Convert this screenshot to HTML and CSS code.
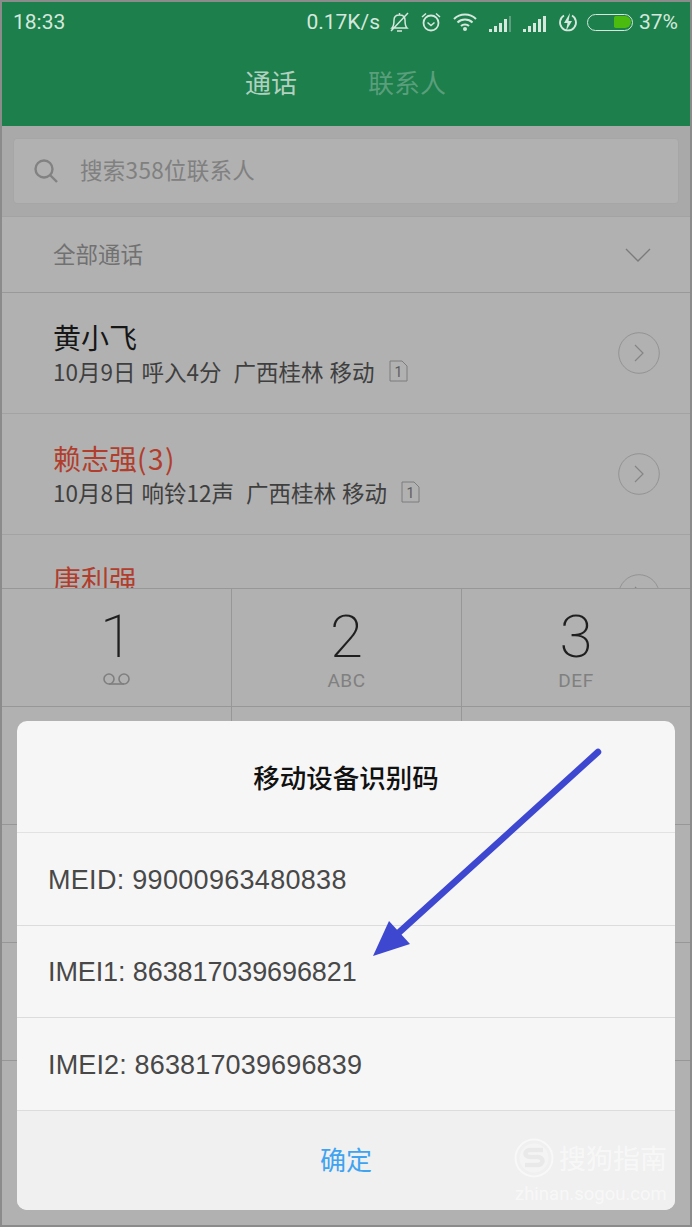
FILE: index.html
```html
<!DOCTYPE html>
<html lang="zh-CN">
<head>
<meta charset="utf-8">
<title>移动设备识别码</title>
<link rel="stylesheet" href="styles.css">
</head>
<body>
<div class="frame">
  <header class="appbar">
    <div class="status">
      <span class="time">18:33</span>
      <div class="status-right">
        <span class="speed">0.17K/s</span>
        <svg class="ic bell" width="21" height="22" viewBox="0 0 21 22"><path d="M3 17c2-2 2-4 2-8 0-3 2-5 5.500-5s5.500 2 5.500 5c0 4 0 6 2 8zM8 20h5M10.500 4V2M2 20L19 2" fill="none" stroke="#d6e8dd" stroke-width="1.500"/></svg>
        <svg class="ic alarm" width="22" height="22" viewBox="0 0 22 22"><circle cx="11" cy="12" r="7.500" fill="none" stroke="#d6e8dd" stroke-width="1.800"/><path d="M7.500 11.500l3.500 3 3.500-3M2 6l4-3.500M20 6l-4-3.500" fill="none" stroke="#d6e8dd" stroke-width="1.600"/></svg>
        <svg class="ic wifi" width="24" height="20" viewBox="0 0 24 20"><path d="M1 7c6-6 16-6 22 0M4.500 10.500c4-4 11-4 15 0M8 14c2-2 6-2 8 0" fill="none" stroke="#d6e8dd" stroke-width="2"/><circle cx="12" cy="17" r="2" fill="#d6e8dd"/></svg>
        <svg class="ic sig1" width="24" height="16" viewBox="0 0 24 16"><g fill="#d6e8dd"><rect x="0" y="13" width="3" height="3"/><rect x="5" y="10" width="3" height="6"/><rect x="10" y="7" width="3" height="9"/><rect x="15" y="3" width="3" height="13"/></g><rect x="20" y="0" width="2" height="16" fill="#5f9f7d"/></svg>
        <svg class="ic sig2" width="24" height="16" viewBox="0 0 24 16"><g fill="#d6e8dd"><rect x="0" y="13" width="3" height="3"/><rect x="5" y="10" width="3" height="6"/><rect x="10" y="7" width="3" height="9"/><rect x="15" y="3" width="3" height="13"/><rect x="20" y="0" width="3" height="16"/></g></svg>
        <svg class="ic charge" width="20" height="20" viewBox="0 0 20 20"><path d="M6 3.500a8 8 0 1 0 8 0" fill="none" stroke="#d6e8dd" stroke-width="1.800"/><path d="M12 1L6 11h3.500L8 19l6-10h-3.500z" fill="#d6e8dd"/></svg>
        <div class="battery"><span class="battery-fill"></span></div>
        <span class="pct">37%</span>
      </div>
    </div>
    <nav class="tabs">
      <span class="tab tab-on">通话</span>
      <span class="tab tab-off">联系人</span>
    </nav>
  </header>

  <div class="searchwrap">
    <div class="search">
      <svg class="search-ic" width="26" height="26" viewBox="0 0 26 26"><circle cx="11" cy="11" r="8.500" fill="none" stroke="#828282" stroke-width="2.400"/><path d="M17 17l7 7" stroke="#828282" stroke-width="2.400"/></svg>
      <span class="search-text">搜索358位联系人</span>
    </div>
  </div>

  <div class="filter">
    <span>全部通话</span>
    <svg width="26" height="14" viewBox="0 0 26 14"><path d="M1 1l12 12L25 1" fill="none" stroke="#7b7b7b" stroke-width="1.400"/></svg>
  </div>

  <div class="calls">
    <div class="call">
      <div class="call-main">
        <div class="name">黄小飞</div>
        <div class="sub"><span>10月9日 呼入4分&nbsp; 广西桂林 移动</span>
          <svg class="sim" width="19" height="22" viewBox="0 0 19 22"><path d="M1 1h12l5 5v15H1z" fill="none" stroke="#7d7d7d"/><text x="9.500" y="16.500" class="sim-num">1</text></svg></div>
      </div>
      <svg class="more" width="42" height="42" viewBox="0 0 42 42"><circle cx="21" cy="21" r="20.300" fill="none" stroke="#939393"/><path d="M17 13l8 8-8 8" fill="none" stroke="#858585" stroke-width="1.200"/></svg>
    </div>
    <div class="call">
      <div class="call-main">
        <div class="name missed">赖志强<span class="count">(3)</span></div>
        <div class="sub"><span>10月8日 响铃12声&nbsp; 广西桂林 移动</span>
          <svg class="sim" width="19" height="22" viewBox="0 0 19 22"><path d="M1 1h12l5 5v15H1z" fill="none" stroke="#7d7d7d"/><text x="9.500" y="16.500" class="sim-num">1</text></svg></div>
      </div>
      <svg class="more" width="42" height="42" viewBox="0 0 42 42"><circle cx="21" cy="21" r="20.300" fill="none" stroke="#939393"/><path d="M17 13l8 8-8 8" fill="none" stroke="#858585" stroke-width="1.200"/></svg>
    </div>
    <div class="call">
      <div class="call-main">
        <div class="name missed">唐利强</div>
        <div class="sub sub-empty"></div>
      </div>
      <svg class="more" width="42" height="42" viewBox="0 0 42 42"><circle cx="21" cy="21" r="20.300" fill="none" stroke="#939393"/><path d="M17 13l8 8-8 8" fill="none" stroke="#858585" stroke-width="1.200"/></svg>
    </div>
  </div>

  <div class="keypad">
    <div class="key"><span class="digit">1</span>
      <svg class="vm" width="30" height="14" viewBox="0 0 30 14"><circle cx="7" cy="7" r="5" fill="none" stroke="#7f7f7f" stroke-width="1.600"/><circle cx="22" cy="7" r="5" fill="none" stroke="#7f7f7f" stroke-width="1.600"/><path d="M7 12h15" stroke="#7f7f7f" stroke-width="1.600"/></svg></div>
    <div class="key"><span class="digit">2</span><span class="letters">ABC</span></div>
    <div class="key"><span class="digit">3</span><span class="letters">DEF</span></div>
    <div class="key"></div><div class="key"></div><div class="key"></div>
    <div class="key"></div><div class="key"></div><div class="key"></div>
    <div class="key"></div><div class="key"></div><div class="key"></div>
  </div>

  <div class="dialog">
    <div class="dialog-title">移动设备识别码</div>
    <div class="dialog-row row-meid">MEID: 99000963480838</div>
    <div class="dialog-row row-imei1">IMEI1: 863817039696821</div>
    <div class="dialog-row row-imei2">IMEI2: 863817039696839</div>
    <div class="dialog-btn">确定</div>
  </div>

  <svg class="arrow" width="240" height="220" viewBox="0 0 240 220"><path d="M226 7L22 192" stroke="#3e47cf" stroke-width="6.500" stroke-linecap="round"/><path d="M1 211L17 176 38 199z" fill="#3e47cf"/></svg>

  <div class="watermark">
    <svg class="wm-logo" width="40" height="40" viewBox="0 0 40 40"><circle cx="20" cy="20" r="18.500" fill="none" stroke="#fff" stroke-opacity=".5" stroke-width="2"/><circle cx="20" cy="20" r="14.500" fill="#fff" fill-opacity=".3"/><path d="M29 12H16c-6 0-6 7 0 7h8c6 0 6 8 0 8H11" fill="none" stroke="#e9e9e9" stroke-width="4.500"/></svg>
    <div class="wm-text">
      <div class="wm-cn">搜狗指南</div>
    </div>
    <div class="wm-url">zhinan.sogou.com</div>
  </div>
</div>
</body>
</html>
```
FILE: styles.css
```css
* { box-sizing: border-box; }
html, body { margin: 0; padding: 0; }
body { width: 692px; height: 1227px; overflow: hidden; font-family: "Roboto", "Noto Sans CJK SC", sans-serif; }
.frame {
  position: relative;
  width: 692px;
  height: 1227px;
  border: 2px solid #8b8b8b;
  background: #b1b1b1;
  display: flex;
  flex-direction: column;
  overflow: hidden;
}
.appbar { height: 124px; background: #1c7f4c; flex: none; }
.status { height: 36px; padding: 4px 12px 0 11px; display: flex; justify-content: space-between; align-items: center; color: #d6e8dd; font-size: 21px; }
.status-right { display: flex; align-items: center; }
.speed { margin-right: 9px; }
.ic { display: block; flex: none; }
.alarm { margin-left: 10px; }
.wifi { margin-left: 11px; }
.sig1 { margin-left: 12px; margin-top: 3px; }
.sig2 { margin-left: 10px; margin-top: 3px; }
.charge { margin-left: 11px; }
.battery { width: 46px; height: 17px; margin-left: 9px; border: 1.500px solid #d6e8dd; border-radius: 9px; padding: 1.500px; display: flex; justify-content: flex-end; }
.battery-fill { width: 17px; background: #4cbb10; border-radius: 2px 7px 7px 2px; }
.pct { margin-left: 6px; }
.tabs { display: flex; font-family: "Noto Sans CJK SC", sans-serif; font-size: 26px; padding: 24px 0 0 243px; }
.tab { line-height: 40px; }
.tab-on { color: #b2d0bf; }
.tab-off { color: #5a9e7b; margin-left: 71px; }

.searchwrap { height: 91px; flex: none; background: #a9a9a9; padding: 12px 11px 0; border-bottom: 1px solid #a3a3a3; }
.search { height: 66px; background: #b1b1b1; border: 1px solid #a6a6a6; border-radius: 4px; display: flex; align-items: center; padding-left: 19px; }
.search-ic { flex: none; }
.search-text { margin-left: 21px; margin-top: -4px; font-size: 22.500px; letter-spacing: .3px; color: #808080; font-family: "Noto Sans CJK SC", sans-serif; }

.filter { height: 76px; flex: none; display: flex; justify-content: space-between; align-items: center; padding: 0 39px 4px 51px; font-family: "Noto Sans CJK SC", sans-serif; font-size: 22.500px; color: #717171; border-bottom: 1px solid #999; }
.filter svg { margin-top: 4px; }

.calls { flex: 1; min-height: 0; overflow: hidden; }
.call { height: 121px; display: flex; justify-content: space-between; align-items: center; padding: 0 30px 0 51px; border-bottom: 1px solid #a3a3a3; }
.call-main { font-family: "Noto Sans CJK SC", sans-serif; margin-top: -2px; }
.name { font-size: 28px; line-height: 38px; color: #161616; }
.missed { color: #b13d2c; }
.count { letter-spacing: 1.500px; }
.sub { display: flex; align-items: center; font-size: 22.500px; line-height: 30px; color: #3f3f3f; word-spacing: 1px; }
.sub-empty { height: 30px; }
.sim { margin-left: 14px; flex: none; }
.sim-num { font-size: 14px; text-anchor: middle; fill: #5c5c5c; font-family: "Roboto", sans-serif; }

.keypad { flex: none; height: 637px; display: grid; grid-template-columns: 230px 230px 1fr; grid-auto-rows: 118px; background: #b1b1b1; border-top: 1px solid #979797; }
.key { display: flex; flex-direction: column; align-items: center; border-bottom: 1px solid #979797; border-right: 1px solid #979797; padding-top: 16px; }
.key:nth-child(3n) { border-right: 0; }
.digit { font-size: 60px; font-weight: 200; line-height: 64px; color: #1f1f1f; }
.letters { font-size: 19px; line-height: 22px; color: #808080; margin-top: 1px; letter-spacing: .5px; }
.vm { margin-top: 3px; }

.dialog { position: absolute; left: 15px; right: 15px; bottom: 15px; height: 489px; background: #f6f6f6; border-radius: 10px; display: flex; flex-direction: column; overflow: hidden; }
.dialog-title { height: 112px; flex: none; display: flex; align-items: center; justify-content: center; font-family: "Noto Sans CJK SC", sans-serif; font-weight: 500; font-size: 26.500px; color: #111; border-bottom: 1px solid #e2e2e2; }
.dialog-row { height: 92.500px; flex: none; display: flex; align-items: center; padding: 3px 0 0 31px; font-family: "Liberation Sans", sans-serif; font-size: 27px; color: #484848; border-bottom: 1px solid #dcdcdc; }
.row-meid { letter-spacing: .3px; }
.row-imei1 { letter-spacing: -.1px; }
.row-imei2 { letter-spacing: .15px; }
.dialog-btn { flex: 1; background: #f0f0f0; display: flex; align-items: center; justify-content: center; padding-bottom: 3px; font-family: "Noto Sans CJK SC", sans-serif; font-size: 26px; color: #3fa3f0; }

.arrow { position: absolute; left: 370px; top: 743px; }

.watermark { position: absolute; left: 512px; top: 1136px; width: 156px; height: 70px; color: rgba(255,255,255,.55); }
.wm-logo { position: absolute; left: 0; top: 0; }
.wm-text { position: absolute; left: 45px; top: 0; }
.wm-cn { font-family: "Noto Sans CJK SC", sans-serif; font-size: 27px; line-height: 40px; white-space: nowrap; }
.wm-url { position: absolute; left: 1px; top: 44px; font-size: 18.500px; line-height: 24px; white-space: nowrap; }
```
